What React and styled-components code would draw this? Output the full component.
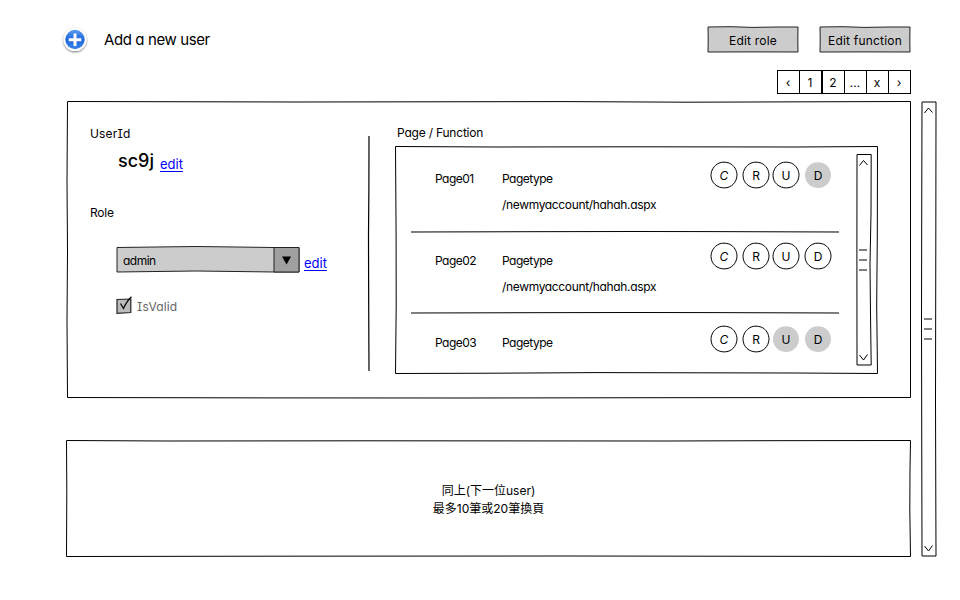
import React from "react";
import styled, { createGlobalStyle, css } from "styled-components";

const GlobalStyle = createGlobalStyle`
  body {
    margin: 0;
    background: #fff;
    color: #000;
    font-family: Inter, "Noto Sans CJK TC", sans-serif;
    font-size: 12px;
    font-feature-settings: "cv11", "cv08";
  }
  *, *::before, *::after { box-sizing: border-box; }
`;

const Screen = styled.div`
  width: 960px;
  height: 600px;
  overflow: hidden;
  padding: 25px 23px 0 60px;
`;

const Header = styled.header`
  display: flex;
  align-items: flex-start;
  height: 45px;
  padding-right: 26px;
`;

const AddIcon = styled.svg`
  width: 30px;
  height: 32px;
  flex: none;
`;

const AddLabel = styled.div`
  margin: 4px auto 0 14px;
  font-size: 15px;
  line-height: 22px;
  letter-spacing: -0.4px;
  white-space: nowrap;
`;

const Outline = styled.svg`
  position: absolute;
  inset: 0;
  width: 100%;
  height: 100%;
  overflow: visible;
  pointer-events: none;
  fill: ${(p) => p.$fill || "none"};
  stroke: #000;
  stroke-width: 1;
`;

const Button = styled.button`
  position: relative;
  width: 92px;
  height: 27px;
  margin: 1px 0 0 ${(p) => p.$gap || 0}px;
  padding: 1px 0 0;
  border: 0;
  background: none;
  color: #000;
  font: inherit;
  font-feature-settings: inherit;
  letter-spacing: 0.2px;
`;

const Label = styled.span`
  position: relative;
  letter-spacing: ${(p) => (p.$track ? p.$track + "px" : "inherit")};
`;

const Pager = styled.nav`
  display: flex;
  justify-content: flex-end;
  padding-right: 26px;
  height: 31px;
`;

const PageCell = styled.a`
  display: flex;
  align-items: center;
  justify-content: center;
  width: ${(p) => (p.$wide ? 24 : 23)}px;
  height: 24px;
  margin-left: -1px;
  padding: 1px 1px 0 0;
  border: 1px solid #000;
  border-right-width: ${(p) => (p.$wide ? 2 : 1)}px;
`;

const Body = styled.main`
  display: flex;
  padding-left: 6px;
`;

const Cards = styled.div`
  width: 845px;
`;

const UserCard = styled.section`
  position: relative;
  display: flex;
  height: 297px;
`;

const Account = styled.div`
  width: 303px;
  padding: 24px 0 0 24px;
`;

const Caption = styled.div`
  height: 18px;
  line-height: 18px;
  letter-spacing: ${(p) => p.$track || 0}px;
`;

const UserRow = styled.div`
  display: flex;
  align-items: flex-start;
  height: 61px;
  padding-left: 28px;
`;

const UserName = styled.span`
  font-size: 18px;
  font-weight: 500;
  line-height: 36px;
`;

const EditLink = styled.a`
  color: #00f;
  font-size: 13px;
  line-height: 18px;
  text-decoration: underline;
  text-underline-offset: 2px;
  text-decoration-skip-ink: none;
`;

const LinkSlot = styled.div`
  padding: ${(p) => p.$top}px 0 0 ${(p) => p.$gap}px;
`;

const RoleRow = styled.div`
  display: flex;
  margin-top: 24px;
  padding-left: 26px;
`;

const Select = styled.div`
  position: relative;
  width: 184px;
  height: 27px;
  padding: 6px 0 0 7px;
  line-height: 18px;
`;

const ValidRow = styled.label`
  display: flex;
  align-items: center;
  height: 20px;
  margin-top: 23px;
  padding-left: 26px;
  gap: 1px;
  color: #666;
  letter-spacing: 0.15px;
`;

const CheckIcon = styled.svg`
  width: 20px;
  height: 20px;
  flex: none;
  overflow: visible;
`;

const DividerMark = styled.svg`
  width: 3px;
  height: 236px;
  margin-right: 23px;
  margin-top: 35px;
  flex: none;
  overflow: visible;
`;

const Access = styled.div`
  width: 483px;
  padding-top: 23px;
`;

const AccessTitle = styled.div`
  height: 22px;
  padding-left: 2px;
  line-height: 18px;
  letter-spacing: -0.2px;
`;

const AccessBox = styled.div`
  position: relative;
  display: flex;
  height: 228px;
  padding: 8px 0 0 16px;
`;

const PageList = styled.div`
  width: 428px;
`;

const PageRow = styled.div`
  display: grid;
  grid-template-columns: 67px 208px auto;
  height: ${(p) => p.$height}px;
  padding: ${(p) => p.$top}px 0 0 24px;
`;

const PageText = styled.div`
  padding-top: ${(p) => p.$top}px;
  line-height: 26px;
  letter-spacing: -0.5px;
`;

const PagePath = styled.div`
  letter-spacing: -0.34px;
`;

const RowRule = styled.svg`
  display: block;
  width: 428px;
  height: 2px;
  overflow: visible;
`;

const Badges = styled.div`
  display: flex;
`;

const Badge = styled.div`
  position: relative;
  width: 28px;
  height: 28px;
  margin-left: ${(p) => p.$gap}px;
  text-align: center;
  line-height: 29px;
  ${(p) => p.$slant && css`font-style: italic;`}
`;

const Track = styled.svg`
  width: 16px;
  height: ${(p) => p.$height}px;
  margin-left: ${(p) => p.$gap}px;
  flex: none;
  overflow: visible;
  fill: none;
  stroke: #000;
`;

const NextCard = styled.section`
  position: relative;
  height: 117px;
  margin-top: 42px;
  padding-top: 42px;
  text-align: center;
  line-height: 18px;
`;

const PERMS = [
  ["C", 0],
  ["R", 4],
  ["U", 2],
  ["D", 4],
];

const PAGES = [
  { name: "Page01", path: true, off: ["D"], height: 77, top: 7, textTop: 5 },
  { name: "Page02", path: true, off: [], height: 79, top: 9, textTop: 6 },
  { name: "Page03", path: false, off: ["U", "D"], height: 60, top: 11, textTop: 5 },
];

function CrudBadge({ letter, gap, off }) {
  return (
    <Badge $gap={gap} $slant={letter === "C"}>
      <Outline $fill={off ? "#ccc" : "none"} viewBox="0 0 28 28">
        <path
          stroke={off ? "none" : "#000"}
          d="M9 2.100C12 .6 16 1 19.500 2.200C24 4.200 27 9 27 14.200C26.600 21.500 21.500 26.800 14.500 26.900C7 27 1.200 21.800 1 14.500C.9 9.500 4 4.400 9 2.100Z"
        />
      </Outline>
      <Label>{letter}</Label>
    </Badge>
  );
}

function ButtonShape() {
  return (
    <Outline $fill="#ccc">
      <path stroke="#222" d="M1 1L24 .7L45 1.400L70 1L91 1L90.800 14L91 26L45 25.900L1 26L1.200 13Z" />
    </Outline>
  );
}

export default function App() {
  return (
    <>
      <GlobalStyle />
      <Screen>
        <Header>
          <AddIcon viewBox="0 0 30 32">
            <defs>
              <linearGradient id="blue" x1="0" y1="0" x2="0" y2="1">
                <stop offset="0" stopColor="#5a9cf0" />
                <stop offset="0.5" stopColor="#1f66dc" />
                <stop offset="1" stopColor="#3b86ea" />
              </linearGradient>
              <filter id="soft" x="-20%" y="-20%" width="140%" height="150%">
                <feDropShadow dx="0" dy="1" stdDeviation="1" floodOpacity="0.55" />
              </filter>
            </defs>
            <circle cx="15" cy="14.500" r="11.500" fill="#fff" filter="url(#soft)" />
            <circle cx="15" cy="14.500" r="9.700" fill="url(#blue)" />
            <path d="M15 8.500V21M8.700 14.700H21.300" stroke="#fff" strokeWidth="3" />
          </AddIcon>
          <AddLabel>Add a new user</AddLabel>
          <Button><ButtonShape /><Label>Edit role</Label></Button>
          <Button $gap={20}><ButtonShape /><Label>Edit function</Label></Button>
        </Header>
        <Pager>
          {["‹", "1", "2", "...", "x", "›"].map((t) => (
            <PageCell key={t} $wide={t === "1"}>{t}</PageCell>
          ))}
        </Pager>
        <Body>
          <Cards>
            <UserCard>
              <Outline>
                <path d="M1.500 .5L230 1L500 .6L620 1.200L844.500 .5V296.500L600 296.700L400 297L200 296.900L1.500 296.500L1 220L1.500 150L1 80Z" />
              </Outline>
              <Account>
                <Caption $track={0.15}>UserId</Caption>
                <UserRow>
                  <UserName>sc9j</UserName>
                  <LinkSlot $top={12} $gap={6}><EditLink>edit</EditLink></LinkSlot>
                </UserRow>
                <Caption $track={-0.2}>Role</Caption>
                <RoleRow>
                  <Select>
                    <Outline $fill="#ccc">
                      <path stroke="#222" d="M1 1.500L40 1L80 .5L120 1L158 1.500L183 1.500V26L158 26L120 25.500L80 25L40 25.500L1 26Z" />
                      <path stroke="#222" fill="#a0a0a0" d="M158 1.500H183V26H158Z" />
                      <path fill="#000" stroke="none" d="M166 10.500H175L170.500 18.500Z" />
                    </Outline>
                    <Label $track={-0.5}>admin</Label>
                  </Select>
                  <LinkSlot $top={8} $gap={4}><EditLink>edit</EditLink></LinkSlot>
                </RoleRow>
                <ValidRow>
                  <CheckIcon viewBox="0 0 20 20">
                    <path d="M1 3.500L14.800 3L14.800 16.500L1 17.300Z" fill="#bbb" stroke="#222" strokeWidth="1.200" />
                    <path d="M4.500 7.500L7.500 12.500C9.500 8 12 4 15.500 .8" fill="none" stroke="#000" strokeWidth="1.200" />
                  </CheckIcon>
                  IsValid
                </ValidRow>
              </Account>
              <DividerMark viewBox="0 0 3 236">
                <path d="M0 0L-.1 50L-.5 100L-.3 170L0 235" fill="none" stroke="#000" strokeWidth="1.200" />
              </DividerMark>
              <Access>
                <AccessTitle>Page / Function</AccessTitle>
                <AccessBox>
                  <Outline>
                    <path d="M.5 .5L100 1L240 .8L400 1L482.500 .5L482.300 90L481.700 160L482.500 227.500L400 227L200 226.600L100 227.200L.5 227.500L1.200 160L1.100 90Z" />
                  </Outline>
                  <PageList>
                    {PAGES.map((p, i) => (
                      <React.Fragment key={p.name}>
                        {i > 0 && (
                          <RowRule>
                            <path d="M0 1L120 .7L220 .5L300 .6L428 1" fill="none" stroke="#000" />
                          </RowRule>
                        )}
                        <PageRow $height={p.height} $top={p.top}>
                          <PageText $top={p.textTop}>{p.name}</PageText>
                          <PageText $top={p.textTop}>
                            <div>Pagetype</div>
                            {p.path && <PagePath>/newmyaccount/hahah.aspx</PagePath>}
                          </PageText>
                          <Badges>
                            {PERMS.map(([l, g]) => (
                              <CrudBadge key={l} letter={l} gap={g} off={p.off.includes(l)} />
                            ))}
                          </Badges>
                        </PageRow>
                      </React.Fragment>
                    ))}
                  </PageList>
                  <Track $height={212} $gap={17}>
                    <path d="M1 .5H15.200L15 60L14 110L14.500 160L15.200 211H1L.9 100Z" />
                    <path d="M3.500 11.500L7.500 6.500L11.500 11M3.500 201L7.500 206L11.500 200.500" />
                    <path d="M3 96H11M3 106H11M3 116H11" />
                  </Track>
                </AccessBox>
              </Access>
            </UserCard>
            <NextCard>
              <Outline>
                <path d="M.5 .5L100 1L300 .8L600 1L700 .7L844.500 .5L844 30L843.800 70L844.500 116.500L500 116L200 116.200L.5 116.500L.8 50Z" />
              </Outline>
              <div>同上(下一位user)</div>
              <div>最多10筆或20筆換頁</div>
            </NextCard>
          </Cards>
          <Track $height={456} $gap={10}>
            <path d="M1 1H15L14.800 150L14.500 300L15 455H1L.5 220L.8 80Z" />
            <path d="M3.500 12L7.500 7L11.500 11.500M3.500 445L7.500 450L11.500 444.500" />
            <path d="M3 218H11M3 228H11M3 238H11" />
          </Track>
        </Body>
      </Screen>
    </>
  );
}
